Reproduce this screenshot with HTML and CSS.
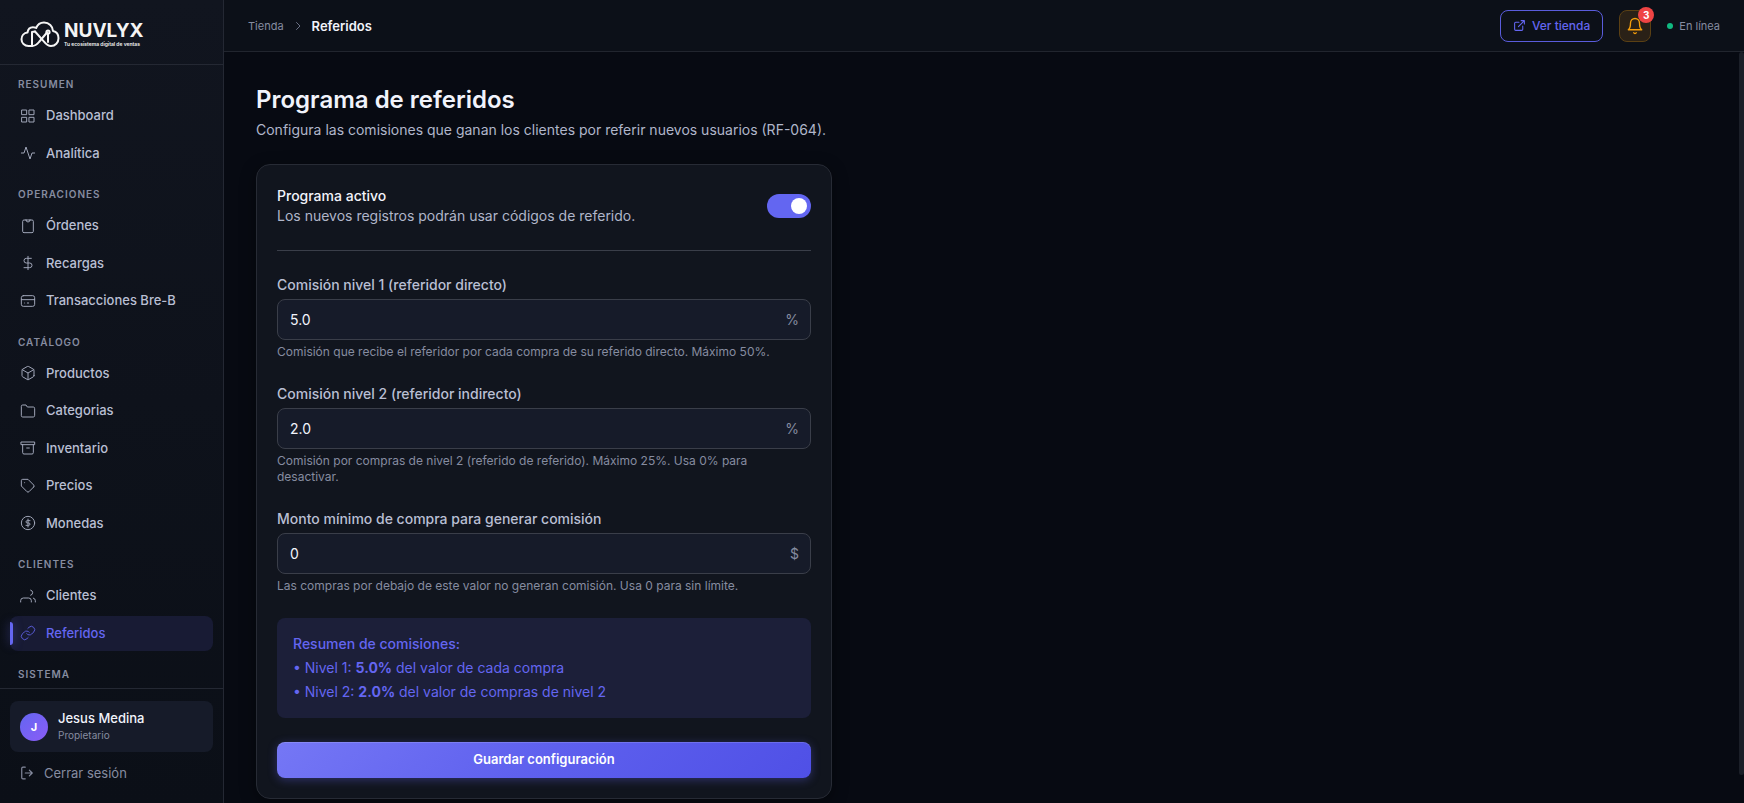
FILE: index.html
```html
<!DOCTYPE html>
<html lang="es">
<head>
<meta charset="utf-8">
<meta name="viewport" content="width=device-width, initial-scale=1">
<title>Referidos</title>
<link rel="stylesheet" href="styles.css">
</head>
<body>
<div class="app">
  <aside class="sidebar">
    <div class="brand">
      <svg class="brand-mark" viewBox="0 0 40 27" fill="none" stroke="currentColor" stroke-width="2" stroke-linecap="round" stroke-linejoin="round">
        <path d="M12 25H8.500C4.500 25 1.500 22 1.500 18.200c0-3.600 2.600-6.400 6-6.700C8 8 10.500 6 13.500 6.200c1.200 0 2 .3 2.700.7C17.500 3.500 20.500 1.500 24 1.500c5 0 8.800 3.600 9 8.500 3.300.7 5.500 3.500 5.500 7.200 0 4.300-3.200 7.800-7.500 7.800-3.500 0-5-1.800-7-4.300L15 10.500"/>
        <path d="M12 24.500V11l3-.5M12 25c3 0 5-1.500 7-4l8-9.500M28 13v8"/>
        <circle cx="28" cy="11" r="1.600"/>
      </svg>
      <div class="brand-words">
        <span class="brand-name">NUVLYX</span>
        <span class="brand-tag">Tu ecosistema digital de ventas</span>
      </div>
    </div>
    <nav class="nav" aria-label="Principal">
      <section class="nav-group">
        <h2 class="nav-title">Resumen</h2>
        <a class="nav-item" href="#"><svg class="icon" viewBox="0 0 24 24"><path d="M3 3h7v7H3zM14 3h7v7h-7zM14 14h7v7h-7zM3 14h7v7H3z"/></svg>Dashboard</a>
        <a class="nav-item" href="#"><svg class="icon" viewBox="0 0 24 24"><path d="M22 12h-4l-3 9L9 3l-3 9H2"/></svg>Analítica</a>
      </section>
      <section class="nav-group">
        <h2 class="nav-title">Operaciones</h2>
        <a class="nav-item" href="#"><svg class="icon" viewBox="0 0 24 24"><path d="M9 3H6a2 2 0 0 0-2 2v15a2 2 0 0 0 2 2h12a2 2 0 0 0 2-2V5a2 2 0 0 0-2-2h-3M9 3a3 3 0 0 0 6 0M9 3h6"/></svg>Órdenes</a>
        <a class="nav-item" href="#"><svg class="icon" viewBox="0 0 24 24"><path d="M12 2v20M17 5H9.500a3.500 3.500 0 0 0 0 7h5a3.500 3.500 0 0 1 0 7H6"/></svg>Recargas</a>
        <a class="nav-item" href="#"><svg class="icon" viewBox="0 0 24 24"><rect x="2" y="4" width="20" height="16" rx="3"/><path d="M2 10h20M7 15h.01M11 15h2"/></svg>Transacciones Bre-B</a>
      </section>
      <section class="nav-group">
        <h2 class="nav-title">Catálogo</h2>
        <a class="nav-item" href="#"><svg class="icon" viewBox="0 0 24 24"><path d="M21 16V8a2 2 0 0 0-1-1.730l-7-4a2 2 0 0 0-2 0l-7 4A2 2 0 0 0 3 8v8a2 2 0 0 0 1 1.730l7 4a2 2 0 0 0 2 0l7-4A2 2 0 0 0 21 16zM3.270 6.960L12 12.010l8.730-5.050M12 22.080V12"/></svg>Productos</a>
        <a class="nav-item" href="#"><svg class="icon" viewBox="0 0 24 24"><path d="M22 19a2 2 0 0 1-2 2H4a2 2 0 0 1-2-2V5a2 2 0 0 1 2-2h5l2 3h9a2 2 0 0 1 2 2z"/></svg>Categorias</a>
        <a class="nav-item" href="#"><svg class="icon" viewBox="0 0 24 24"><path d="M4 7v12a2 2 0 0 0 2 2h12a2 2 0 0 0 2-2V7M2 3h20v4H2zM10 12h4"/></svg>Inventario</a>
        <a class="nav-item" href="#"><svg class="icon" viewBox="0 0 24 24"><path d="M20.590 13.410l-7.170 7.170a2 2 0 0 1-2.830 0L2 12V4a2 2 0 0 1 2-2h8l8.590 8.590a2 2 0 0 1 0 2.820zM7 7h.01"/></svg>Precios</a>
        <a class="nav-item" href="#"><svg class="icon" viewBox="0 0 24 24"><circle cx="12" cy="12" r="10"/><path d="M12 6v12M15 8.500h-4.200a1.700 1.700 0 0 0 0 3.500h2.400a1.700 1.700 0 0 1 0 3.500H9"/></svg>Monedas</a>
      </section>
      <section class="nav-group">
        <h2 class="nav-title">Clientes</h2>
        <a class="nav-item" href="#"><svg class="icon" viewBox="0 0 24 24"><path d="M17 21v-2a4 4 0 0 0-4-4H5a4 4 0 0 0-4 4v2M23 21v-2a4 4 0 0 0-3-3.870M16 3.130a4 4 0 0 1 0 7.750"/></svg>Clientes</a>
        <a class="nav-item nav-item-active" href="#" aria-current="page"><svg class="icon" viewBox="0 0 24 24"><path d="M10 13a5 5 0 0 0 7.540.540l3-3a5 5 0 0 0-7.070-7.070l-1.720 1.710M14 11a5 5 0 0 0-7.540-.540l-3 3a5 5 0 0 0 7.070 7.070l1.710-1.710"/></svg>Referidos</a>
      </section>
      <section class="nav-group">
        <h2 class="nav-title">Sistema</h2>
      </section>
    </nav>
    <div class="account">
      <div class="user">
        <span class="avatar">J</span>
        <div class="user-text">
          <span class="user-name">Jesus Medina</span>
          <span class="user-role">Propietario</span>
        </div>
      </div>
      <button class="logout" type="button"><svg class="icon icon-small" viewBox="0 0 24 24"><path d="M9 2H5a2 2 0 0 0-2 2v16a2 2 0 0 0 2 2h4M16 17l5-5-5-5M21 12H9"/></svg>Cerrar sesión</button>
    </div>
  </aside>

  <div class="page">
    <header class="topbar">
      <nav class="crumbs" aria-label="Ruta">
        <a class="crumb" href="#">Tienda</a>
        <svg class="crumb-sep" viewBox="0 0 24 24"><path d="M9 5l7 7-7 7"/></svg>
        <span class="crumb-current">Referidos</span>
      </nav>
      <div class="actions">
        <a class="store-link" href="#"><svg class="icon-link" viewBox="0 0 24 24"><path d="M18 13v6a2 2 0 0 1-2 2H5a2 2 0 0 1-2-2V8a2 2 0 0 1 2-2h6M15 3h6v6M10 14L21 3"/></svg>Ver tienda</a>
        <button class="bell" type="button" aria-label="Notificaciones">
          <svg class="icon-bell" viewBox="0 0 24 24"><path d="M18 8A6 6 0 0 0 6 8c0 7-3 9-3 9h18s-3-2-3-9M13.730 21a2 2 0 0 1-3.460 0"/></svg>
          <span class="bell-count">3</span>
        </button>
        <span class="status"><span class="status-dot"></span>En línea</span>
      </div>
    </header>

    <main class="content">
      <h1 class="title">Programa de referidos</h1>
      <p class="subtitle">Configura las comisiones que ganan los clientes por referir nuevos usuarios (RF-064).</p>

      <form class="card">
        <div class="toggle-row">
          <div>
            <label class="toggle-label" for="active">Programa activo</label>
            <p class="toggle-help">Los nuevos registros podrán usar códigos de referido.</p>
          </div>
          <input class="switch" id="active" type="checkbox" role="switch" checked>
        </div>

        <div class="field">
          <label class="label" for="level1">Comisión nivel 1 (referidor directo)</label>
          <div class="control"><input class="input" id="level1" type="text" value="5.0"><span class="unit">%</span></div>
          <p class="hint">Comisión que recibe el referidor por cada compra de su referido directo. Máximo 50%.</p>
        </div>
        <div class="field">
          <label class="label" for="level2">Comisión nivel 2 (referidor indirecto)</label>
          <div class="control"><input class="input" id="level2" type="text" value="2.0"><span class="unit">%</span></div>
          <p class="hint">Comisión por compras de nivel 2 (referido de referido). Máximo 25%. Usa 0% para desactivar.</p>
        </div>
        <div class="field">
          <label class="label" for="minimum">Monto mínimo de compra para generar comisión</label>
          <div class="control"><input class="input" id="minimum" type="text" value="0"><span class="unit">$</span></div>
          <p class="hint">Las compras por debajo de este valor no generan comisión. Usa 0 para sin límite.</p>
        </div>

        <div class="summary">
          <p class="summary-title">Resumen de comisiones:</p>
          <p>• Nivel 1: <strong>5.0%</strong> del valor de cada compra</p>
          <p>• Nivel 2: <strong>2.0%</strong> del valor de compras de nivel 2</p>
        </div>

        <button class="save" type="button">Guardar configuración</button>
      </form>
    </main>
    <span class="scroll-thumb" aria-hidden="true"></span>
  </div>
</div>
</body>
</html>
```
FILE: styles.css
```css
* { box-sizing: border-box; }

body {
  margin: 0;
  background: #070a12;
  color: #f1f3fb;
  font-family: Inter, "Liberation Sans", sans-serif;
  font-size: 14px;
  line-height: 20px;
}

h1, h2, p { margin: 0; }
a { color: inherit; text-decoration: none; }
button, input { font: inherit; color: inherit; }
button { cursor: pointer; }

svg {
  display: block;
  flex: none;
  fill: none;
  stroke: currentColor;
  stroke-width: 1.5;
  stroke-linecap: round;
  stroke-linejoin: round;
}

.app {
  display: flex;
  height: 100vh;
  overflow: hidden;
}

/* Sidebar */
.sidebar {
  display: flex;
  flex-direction: column;
  flex: none;
  width: 224px;
  border-right: 1px solid #242833;
  background: linear-gradient(180deg, #11151f, #0b0f17);
}

.brand {
  display: flex;
  align-items: center;
  gap: 4px;
  flex: none;
  height: 65px;
  padding: 4px 20px 0;
  border-bottom: 1px solid #242833;
  color: #f4f4f4;
}

.brand-mark { width: 40px; height: 27px; stroke-width: 2; }
.brand-words { display: flex; flex-direction: column; }
.brand-name { font-size: 19px; font-weight: 700; line-height: 20px; }
.brand-tag { font-size: 5px; font-weight: 600; line-height: 6px; white-space: nowrap; }

.nav {
  display: flex;
  flex-direction: column;
  gap: 13px;
  flex: 1;
  min-height: 0;
  overflow: hidden;
  padding: 11px 10px 0;
}

.nav-group { flex: none; }

.nav-title {
  padding: 0 8px 6px;
  color: #868ca0;
  font-size: 10px;
  font-weight: 600;
  line-height: 16px;
  letter-spacing: 1px;
  text-transform: uppercase;
}

.nav-item {
  position: relative;
  display: flex;
  align-items: center;
  gap: 10px;
  margin-bottom: 2px;
  padding: 8px 10px;
  border-radius: 8px;
  color: #b9bfd3;
  font-size: 13px;
  font-weight: 500;
  line-height: 1.5;
}

.icon { width: 16px; height: 16px; opacity: 0.85; }
.icon-small { width: 14px; height: 14px; stroke-width: 2; opacity: 1; }

.nav-item-active { background: #181b34; color: #6466f1; }

.nav-item-active::before {
  content: "";
  position: absolute;
  left: 0;
  top: 6px;
  bottom: 6px;
  width: 3px;
  border-radius: 0 3px 3px 0;
  background: #6466f1;
  box-shadow: 0 0 10px rgba(99, 102, 241, 0.5);
}

.account {
  flex: none;
  padding: 12px 10px 13px;
  border-top: 1px solid #242833;
}

.user {
  display: flex;
  align-items: center;
  gap: 10px;
  padding: 8px 10px;
  border-radius: 8px;
  background: #161b29;
}

.avatar {
  display: grid;
  place-items: center;
  width: 28px;
  height: 28px;
  border-radius: 50%;
  background: linear-gradient(135deg, #6366f1, #8b5cf6);
  color: #fff;
  font-size: 11px;
  font-weight: 700;
}

.user-text { display: flex; flex-direction: column; }
.user-name { font-size: 13px; font-weight: 500; line-height: 18px; }
.user-role { color: #868ca0; font-size: 10px; line-height: 17px; }

.logout {
  display: flex;
  align-items: center;
  gap: 10px;
  width: 100%;
  margin-top: 4px;
  padding: 7px 10px;
  border: 0;
  background: none;
  color: #868ca0;
  font-size: 13px;
}

/* Top bar */
.page {
  position: relative;
  display: flex;
  flex-direction: column;
  flex: 1;
  min-width: 0;
}

.topbar {
  display: flex;
  align-items: center;
  justify-content: space-between;
  flex: none;
  height: 52px;
  padding: 0 24px;
  border-bottom: 1px solid #21252e;
  background: #0c1018;
}

.crumbs, .actions, .status, .store-link { display: flex; align-items: center; }
.crumbs { gap: 8px; }
.crumb { color: #868ca0; font-size: 11px; }
.crumb-sep { width: 12px; height: 12px; color: #6b7185; stroke-width: 2; }
.crumb-current { font-size: 13px; font-weight: 600; }
.actions { gap: 16px; }

.store-link {
  gap: 6px;
  height: 32px;
  padding: 0 12px;
  border: 1px solid #5a5cdc;
  border-radius: 8px;
  color: #6466f1;
  font-size: 12px;
  font-weight: 500;
}

.icon-link { width: 13px; height: 13px; stroke-width: 2; }

.bell {
  position: relative;
  display: grid;
  place-items: center;
  width: 32px;
  height: 32px;
  padding: 0;
  border: 1px solid #5b4014;
  border-radius: 8px;
  background: #2a2117;
  color: #f59e0b;
}

.icon-bell { width: 18px; height: 18px; stroke-width: 1.8; }

.bell-count {
  position: absolute;
  top: -4px;
  right: -4px;
  width: 16px;
  height: 16px;
  border-radius: 50%;
  background: #ef4444;
  color: #fff;
  font-size: 10px;
  font-weight: 700;
  line-height: 16px;
  text-align: center;
}

.status { gap: 6px; color: #868ca0; font-size: 11px; }
.status-dot { width: 6px; height: 6px; border-radius: 50%; background: #10b981; }

/* Content */
.content {
  flex: 1;
  min-height: 0;
  overflow-y: auto;
  padding: 32px;
  scrollbar-width: none;
}

.scroll-thumb {
  position: absolute;
  top: 52px;
  right: 0;
  bottom: 28px;
  width: 5px;
  border-radius: 3px;
  background: #1b1f28;
}

.title { font-size: 24px; font-weight: 600; line-height: 32px; }
.subtitle { margin-top: 4px; color: #b0b6ca; }

.card {
  display: flex;
  flex-direction: column;
  gap: 24px;
  max-width: 576px;
  margin-top: 24px;
  padding: 20px;
  border: 1px solid #272b35;
  border-radius: 14px;
  background: #11151e;
  box-shadow: 0 4px 16px rgba(0, 0, 0, 0.4);
}

.toggle-row {
  display: flex;
  align-items: center;
  justify-content: space-between;
  gap: 16px;
  padding-bottom: 24px;
  border-bottom: 1px solid #3a3e49;
}

.toggle-label { display: block; font-weight: 500; line-height: 21px; }
.toggle-help { color: #b0b6ca; }

.switch {
  flex: none;
  display: flex;
  align-items: center;
  justify-content: flex-end;
  appearance: none;
  width: 44px;
  height: 24px;
  margin: 0;
  padding: 4px;
  border-radius: 12px;
  background: #6366f1;
}

.switch::before {
  content: "";
  width: 16px;
  height: 16px;
  border-radius: 50%;
  background: #fff;
}

.switch:not(:checked) { justify-content: flex-start; background: #3a3e49; }

.field { display: flex; flex-direction: column; gap: 4px; }
.label { color: #b9bfd3; font-weight: 500; }

.control {
  display: flex;
  align-items: center;
  padding: 0 11px 0 12px;
  border: 1px solid #3a3e49;
  border-radius: 8px;
  background: #161b29;
}

.input {
  flex: 1;
  min-width: 0;
  height: 39px;
  padding: 0;
  border: 0;
  outline: 0;
  background: none;
}

.unit { color: #868ca0; }
.hint { color: #868ca0; font-size: 12px; line-height: 16px; }

.summary {
  display: flex;
  flex-direction: column;
  gap: 4px;
  padding: 16px;
  border-radius: 8px;
  background: #1c1f39;
  color: #6466f1;
}

.summary-title { font-weight: 500; }

.save {
  height: 36px;
  padding: 0 16px 2px;
  border: 0;
  border-radius: 8px;
  background: linear-gradient(135deg, #7577f5, #5e60ee 50%, #4f50e6);
  box-shadow: 0 2px 10px rgba(99, 102, 241, 0.35), inset 0 1px 0 rgba(255, 255, 255, 0.15);
  color: #fff;
  font-size: 13px;
  font-weight: 600;
}
```
